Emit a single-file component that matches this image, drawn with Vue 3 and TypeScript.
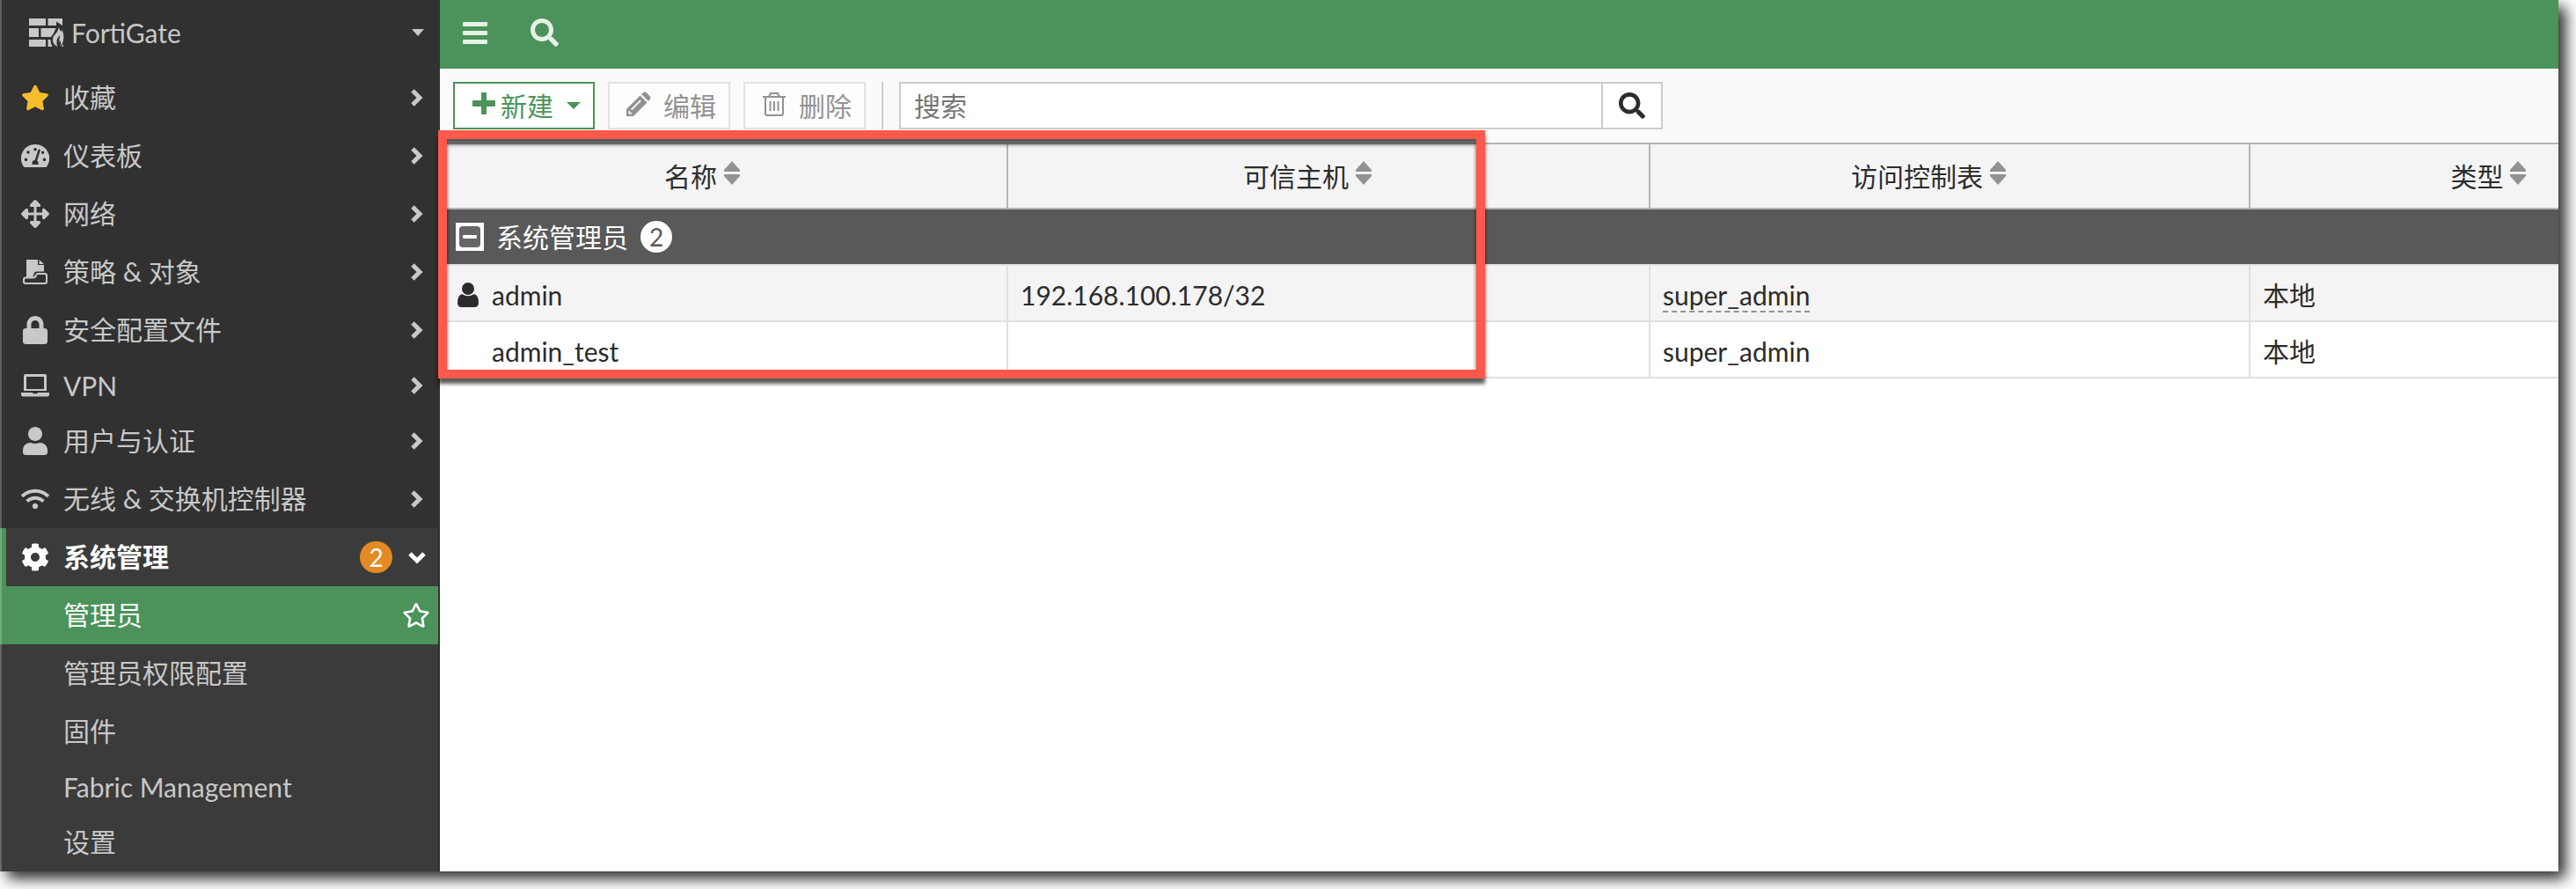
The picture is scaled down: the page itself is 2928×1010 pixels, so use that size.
<script setup lang="ts">
interface Shape { box: string; d: string }
interface NavItem { label: string; icon: string; latin?: boolean; gold?: boolean }
interface SubItem { label: string; latin?: boolean; active?: boolean }
interface Admin { name: string; host: string; profile: string; type: string; current: boolean }

const userPath = 'M224 256c70.7 0 128-57.3 128-128S294.7 0 224 0 96 57.3 96 128s57.3 128 128 128zm89.6 32h-16.7c-22.2 10.2-46.9 16-72.9 16s-50.6-5.8-72.9-16h-16.7C60.2 288 0 348.2 0 422.4V464c0 26.5 21.5 48 48 48h352c26.5 0 48-21.5 48-48v-41.6c0-74.2-60.2-134.4-134.4-134.4z'
const searchPath = 'M505 442.7L405.3 343c-4.5-4.5-10.6-7-17-7H372c27.6-35.3 44-79.7 44-128C416 93.1 322.9 0 208 0S0 93.1 0 208s93.1 208 208 208c48.3 0 92.7-16.4 128-44v16.3c0 6.4 2.5 12.5 7 17l99.7 99.7c9.4 9.4 24.6 9.4 33.9 0l28.3-28.3c9.4-9.4 9.4-24.6.1-34zM208 336c-70.7 0-128-57.2-128-128 0-70.7 57.2-128 128-128 70.7 0 128 57.2 128 128 0 70.7-57.2 128-128 128z'
const starOutline = 'M528.1 171.5L382 150.2 316.7 17.8c-11.7-23.6-45.6-23.9-57.4 0L194 150.2 47.9 171.5c-26.2 3.8-36.7 36.1-17.7 54.6l105.7 103-25 145.5c-4.5 26.3 23.2 46 46.4 33.7L288 439.6l130.7 68.7c23.2 12.2 50.9-7.4 46.4-33.7l-25-145.5 105.7-103c19-18.5 8.5-50.8-17.7-54.6zM388.6 312.3l23.7 138.4L288 385.4l-124.3 65.3 23.7-138.4-100.6-98 139-20.2 62.2-126 62.2 126 139 20.2-100.6 98z'

const icons: Record<string, Shape> = {
  star: { box: '0 0 576 512', d: 'M259.3 17.8L194 150.2 47.9 171.5c-26.2 3.8-36.7 36.1-17.7 54.6l105.7 103-25 145.5c-4.5 26.3 23.2 46 46.4 33.7L288 439.6l130.7 68.7c23.2 12.2 50.9-7.4 46.4-33.7l-25-145.5 105.7-103c19-18.5 8.5-50.8-17.7-54.6L382 150.2 316.7 17.8c-11.7-23.6-45.6-23.9-57.4 0z' },
  gauge: { box: '0 0 32 32', d: 'M16 3A16 16 0 0 0 2.200 27.200Q2.800 29 4.500 29H27.500Q29.200 29 29.800 27.200A16 16 0 0 0 16 3ZM16 7a1.800 1.800 0 1 1 0 3.600a1.800 1.800 0 1 1 0-3.600ZM8 10.200a1.800 1.800 0 1 1 0 3.600a1.800 1.800 0 1 1 0-3.600ZM24.600 10.600a1.700 1.700 0 1 1 0 3.400a1.700 1.700 0 1 1 0-3.400ZM5.500 18.600a1.800 1.800 0 1 1 0 3.600a1.800 1.800 0 1 1 0-3.600ZM26.500 18.600a1.800 1.800 0 1 1 0 3.600a1.800 1.800 0 1 1 0-3.600ZM20.200 8.600a1.200 1.200 0 0 1 1.600 1.300L18.200 21.500Q20.500 23.500 19.300 26H12.700Q11.500 21.700 15.700 20.700L19.400 9.200Z' },
  arrows: { box: '0 0 32 32', d: 'M14.800 0.600Q16-0.400 17.200 0.600L22 5.400Q22.600 8 20.500 8H17.500V14.500H24V11.500Q24 9.400 26.600 10L31.400 14.800Q32.400 16 31.400 17.200L26.600 22Q24 22.600 24 20.500V17.500H17.500V24H20.500Q22.600 24 22 26.600L17.200 31.400Q16 32.400 14.800 31.400L10 26.600Q9.400 24 11.500 24H14.500V17.500H8V20.500Q8 22.600 5.400 22L0.600 17.200Q-0.400 16 0.600 14.800L5.400 10Q8 9.400 8 11.500V14.500H14.500V8H11.500Q9.400 8 10 5.400Z' },
  policy: { box: '0 0 32 32', d: 'M6 2H19V8H26V15.500H18Q15 15.500 14.500 18Q14 21.500 12 21.500H6ZM20.500 2L26 7H20.500ZM5 21.500H12.500Q15.500 21.500 16 19.500Q16.500 17 19 17H27A3 3 0 0 1 30 20V27A3 3 0 0 1 27 30H5A3 3 0 0 1 2 27V24.500A3 3 0 0 1 5 21.500ZM5.500 23.500Q4 23.500 4 25V26.500Q4 28 5.500 28H26.500Q28 28 28 26.500V20.500Q28 19 26.500 19H19Q18 19 17.800 20.500Q17 23.500 13.500 23.500Z' },
  lock: { box: '0 0 448 512', d: 'M400 224h-24v-72C376 68.2 307.8 0 224 0S72 68.2 72 152v72H48c-26.500 0-48 21.500-48 48v192c0 26.500 21.500 48 48 48h352c26.500 0 48-21.500 48-48V272c0-26.500-21.500-48-48-48zm-104 0H152v-72c0-39.700 32.300-72 72-72s72 32.300 72 72v72z' },
  laptop: { box: '0 0 32 32', d: 'M5 3H27Q29 3 29 5V22H3V5Q3 3 5 3ZM6 6V20H26V6ZM0 24H13Q13 25.300 14.500 25.300H17.500Q19 25.300 19 24H32V26Q32 28.500 29.500 28.500H2.500Q0 28.500 0 26Z' },
  user: { box: '0 0 448 512', d: userPath },
  wifi: { box: '0 0 640 512', d: 'M634.910 154.880C457.740-8.990 182.190-8.930 5.090 154.880c-6.660 6.160-6.790 16.590-.35 22.980l34.240 33.970c6.140 6.100 16.020 6.230 22.400.38 145.920-133.680 371.300-133.710 517.250 0 6.380 5.850 16.260 5.710 22.400-.38l34.240-33.970c6.430-6.390 6.300-16.820-.36-22.980zM320 352c-35.350 0-64 28.650-64 64s28.650 64 64 64 64-28.650 64-64-28.650-64-64-64zm202.670-83.590c-115.260-101.930-290.210-101.820-405.340 0-6.900 6.100-7.120 16.690-.57 23.150l34.440 33.990c6 5.920 15.660 6.320 22.050.8 83.950-72.570 209.740-72.410 293.490 0 6.390 5.520 16.050 5.130 22.050-.8l34.440-33.990c6.560-6.460 6.330-17.060-.56-23.150z' },
  cog: { box: '0 0 512 512', d: 'M487.4 315.7l-42.6-24.6c4.3-23.2 4.3-47 0-70.2l42.6-24.6c4.9-2.8 7.1-8.6 5.5-14-11.1-35.6-30-67.8-54.7-94.6-3.8-4.1-10-5.1-14.8-2.3L380.8 110c-17.9-15.4-38.5-27.3-60.8-35.1V25.8c0-5.600-3.900-10.500-9.400-11.700-36.700-8.200-74.300-7.800-109.200 0-5.500 1.200-9.400 6.100-9.400 11.700V75c-22.200 7.900-42.800 19.800-60.800 35.100L88.700 85.500c-4.900-2.800-11-1.900-14.800 2.300-24.700 26.700-43.600 58.900-54.700 94.600-1.700 5.400.6 11.200 5.500 14L67.300 221c-4.300 23.200-4.300 47 0 70.200l-42.600 24.600c-4.900 2.800-7.100 8.600-5.500 14 11.100 35.600 30 67.800 54.700 94.600 3.800 4.100 10 5.100 14.800 2.300l42.600-24.600c17.900 15.400 38.500 27.300 60.800 35.100v49.200c0 5.600 3.900 10.500 9.400 11.700 36.700 8.200 74.300 7.800 109.200 0 5.500-1.200 9.400-6.100 9.400-11.700v-49.200c22.200-7.900 42.800-19.800 60.800-35.100l42.600 24.600c4.900 2.800 11 1.900 14.800-2.300 24.700-26.700 43.600-58.900 54.700-94.600 1.500-5.500-.7-11.300-5.600-14.100zM256 336c-44.100 0-80-35.900-80-80s35.900-80 80-80 80 35.900 80 80-35.900 80-80 80z' },
}

const nav: NavItem[] = [
  { label: '收藏', icon: 'star', gold: true },
  { label: '仪表板', icon: 'gauge' },
  { label: '网络', icon: 'arrows' },
  { label: '策略 & 对象', icon: 'policy' },
  { label: '安全配置文件', icon: 'lock' },
  { label: 'VPN', icon: 'laptop', latin: true },
  { label: '用户与认证', icon: 'user' },
  { label: '无线 & 交换机控制器', icon: 'wifi' },
]

const sub: SubItem[] = [
  { label: '管理员', active: true },
  { label: '管理员权限配置' },
  { label: '固件' },
  { label: 'Fabric Management', latin: true },
  { label: '设置' },
]

const columns: string[] = ['名称', '可信主机', '访问控制表', '类型']
const admins: Admin[] = [
  { name: 'admin', host: '192.168.100.178/32', profile: 'super_admin', type: '本地', current: true },
  { name: 'admin_test', host: '', profile: 'super_admin', type: '本地', current: false },
]
</script>

<template>
  <div class="page">
    <div class="frame">
      <aside class="sidebar">
        <button class="brand" type="button">
          <svg class="brand-icon" viewBox="0 0 40 32" aria-hidden="true">
            <path d="M0 0H19V8H0ZM21.500 0H38V8L31 3.500V8H21.500ZM0 11H11V21H0ZM13.500 11H30.500Q29 16 25 21H13.500ZM0 24H19V32H0ZM21.500 24H24.500Q24 28 26.500 32H21.500ZM39 29V32H37Z" />
            <path d="M33.500 10Q35 13 36.500 15Q38 13.500 37.500 12.500Q40 19 39.200 23Q38.500 29 35.500 31.500Q37 28 35.500 25Q35 26.500 34.500 27Q34 22 35.500 19Q31.500 22 31.500 26Q31 29 32.500 32Q27 29.500 27 24.500Q27 20 30 17.500Q33.500 14 33.500 10Z" />
          </svg>
          <span>FortiGate</span>
          <svg class="caret" viewBox="0 0 14 8" aria-hidden="true"><path d="M0 0H14L7 8Z" /></svg>
        </button>
        <nav>
          <a v-for="item in nav" :key="item.label" href="#" class="item" :class="{ latin: item.latin }">
            <svg class="icon" :class="{ gold: item.gold }" :viewBox="icons[item.icon].box" aria-hidden="true"><path fill-rule="evenodd" :d="icons[item.icon].d" /></svg>
            <span class="label">{{ item.label }}</span>
            <svg class="chev" viewBox="0 0 20 20" aria-hidden="true"><path d="M5 2L13 10L5 18" /></svg>
          </a>
          <a href="#" class="item open">
            <svg class="icon" :viewBox="icons.cog.box" aria-hidden="true"><path :d="icons.cog.d" /></svg>
            <span class="label">系统管理</span>
            <span class="badge">2</span>
            <svg class="chev" viewBox="0 0 20 20" aria-hidden="true"><path d="M2 6L10 14L18 6" /></svg>
          </a>
          <div class="sub">
            <a v-for="item in sub" :key="item.label" href="#" class="item" :class="{ latin: item.latin, active: item.active }">
              <span class="label">{{ item.label }}</span>
              <svg v-if="item.active" class="fav" viewBox="0 0 576 512" aria-hidden="true"><path :d="starOutline" /></svg>
            </a>
          </div>
        </nav>
      </aside>

      <main class="main">
        <header class="topbar">
          <button type="button" aria-label="菜单">
            <svg viewBox="0 0 32 32" aria-hidden="true"><path d="M2 5Q2 4 3 4H29Q30 4 30 5V8Q30 9 29 9H3Q2 9 2 8ZM2 15Q2 14 3 14H29Q30 14 30 15V18Q30 19 29 19H3Q2 19 2 18ZM2 25Q2 24 3 24H29Q30 24 30 25V28Q30 29 29 29H3Q2 29 2 28Z" /></svg>
          </button>
          <button type="button" aria-label="搜索菜单">
            <svg viewBox="0 0 512 512" aria-hidden="true"><path :d="searchPath" /></svg>
          </button>
        </header>

        <div class="toolbar">
          <button type="button" class="btn create">
            <svg class="glyph" viewBox="0 0 38 32" aria-hidden="true"><path d="M16 1H21Q22 1 22 2V10H31Q32 10 32 11V16Q32 17 31 17H22V25Q22 26 21 26H17Q16 26 16 25V17H7Q6 17 6 16V11Q6 10 7 10H16Z" /></svg>
            <span>新建</span>
            <svg class="drop" viewBox="0 0 16 8" aria-hidden="true"><path d="M0 0H16L8 8Z" /></svg>
          </button>
          <button type="button" class="btn" disabled>
            <svg class="glyph" viewBox="0 0 38 32" aria-hidden="true"><path fill-rule="evenodd" d="M5 28V20L20.500 4.500L28.500 12.500L13 28ZM22 3L24.500 0.800Q26 0 27.500 1L32 5.500Q33 7 32 8.500L30 11ZM10 20L20.500 9.500L21.800 10.800L11.300 21.300ZM7.500 22V25.500H11V24H9V22Z" /></svg>
            <span>编辑</span>
          </button>
          <button type="button" class="btn" disabled>
            <svg class="glyph line" viewBox="0 0 38 32" aria-hidden="true"><path d="M6 6H32M13 6L15 2H23L25 6M9 6V25Q9 27 11 27H27Q29 27 29 25V6M14.500 11V22M19 11V22M23.500 11V22" /></svg>
            <span>删除</span>
          </button>
          <span class="divider"></span>
          <div class="search">
            <input type="text" placeholder="搜索" aria-label="搜索" />
            <button type="button" aria-label="执行搜索">
              <svg viewBox="0 0 512 512" aria-hidden="true"><path :d="searchPath" /></svg>
            </button>
          </div>
        </div>

        <section class="grid">
          <div class="clip">
            <table>
              <colgroup><col class="c-name" /><col class="c-host" /><col class="c-profile" /><col /></colgroup>
              <thead>
                <tr>
                  <th v-for="c in columns" :key="c" scope="col">
                    <span class="head">{{ c }}<svg viewBox="0 0 18 28" aria-hidden="true"><path d="M0 12V10L9 0L18 10V12ZM0 15H18V17L9 27L0 17Z" /></svg></span>
                  </th>
                </tr>
              </thead>
              <tbody>
                <tr class="group">
                  <td colspan="4">
                    <div class="group-cell">
                      <button type="button" aria-label="折叠"><svg viewBox="0 0 32 32" aria-hidden="true"><path fill="#fff" d="M0 0H32V32H0Z" /><rect x="4" y="4" width="24" height="24" rx="4" fill="#666" /><rect x="8" y="14" width="16" height="4" rx="1" fill="#fff" /></svg></button>
                      <span>系统管理员</span>
                      <span class="count">2</span>
                    </div>
                  </td>
                </tr>
                <tr v-for="a in admins" :key="a.name" class="row">
                  <td class="name"><div class="name-cell"><span class="who"><svg v-if="a.current" viewBox="0 0 24 28" aria-hidden="true"><circle cx="12" cy="7" r="7" /><path d="M5 13Q12 17.500 19 13Q24 14.500 24 23Q24 28 19 28H5Q0 28 0 23Q0 14.500 5 13Z" /></svg></span>{{ a.name }}</div></td>
                  <td>{{ a.host }}</td>
                  <td><a v-if="a.current" href="#" class="ref">{{ a.profile }}</a><template v-else>{{ a.profile }}</template></td>
                  <td>{{ a.type }}</td>
                </tr>
              </tbody>
            </table>
          </div>
          <div class="marker"></div>
        </section>
      </main>
    </div>
  </div>
</template>

<style>
body { margin: 0; background: #fff; }
</style>

<style scoped>
* { box-sizing: border-box; }
.page {
  padding: 0 20px 20px 0;
  overflow: hidden;
  font-family: Lato, "Noto Sans CJK SC", sans-serif;
  font-size: 30px;
  line-height: 36px;
  color: #2c2c2c;
}
.frame {
  display: flex;
  min-height: calc(100vh - 20px);
  background: #fff;
  box-shadow: 8px 8px 16px rgba(0, 0, 0, 0.85);
}
button, input { font: inherit; color: inherit; margin: 0; padding: 0; border: 0; background: none; border-radius: 0; }
a { color: inherit; text-decoration: none; }
svg { display: block; flex: none; fill: currentColor; }

.sidebar {
  position: relative;
  flex: none;
  display: flex;
  flex-direction: column;
  width: 500px;
  background: #313131;
  color: #c8c8c8;
  border-right: 2px solid #313131;
}
.sidebar::after {
  content: "";
  position: absolute;
  inset: 0 auto 0 0;
  width: 2px;
  background: rgba(255, 255, 255, 0.22);
}
.brand { display: flex; align-items: center; width: 100%; height: 78px; padding: 0 16px 4px 33px; text-align: left; }
.brand span { flex: 1; margin-left: 8px; }
.brand-icon { width: 40px; height: 32px; }
.caret { width: 14px; height: 8px; }
nav { display: flex; flex-direction: column; flex: 1; }
.item { display: flex; align-items: center; height: 66px; padding: 0 14px 0 24px; }
.item.latin { height: 60px; }
.label { padding-bottom: 2px; }
.latin .label { padding-bottom: 0; }
.icon { width: 32px; height: 32px; margin-right: 16px; }
.icon.gold { color: #f7bd2c; }
.chev { width: 20px; height: 20px; margin-left: auto; fill: none; stroke: currentColor; stroke-width: 5; }
.open { padding-left: 17px; border-left: 7px solid #4b935a; background: #3b3b3b; color: #fff; font-weight: 700; }
.open .chev { margin-left: 18px; }
.badge {
  width: 37px;
  margin-left: auto;
  border-radius: 18px;
  background: #e48a24;
  font-size: 28px;
  font-weight: 400;
  text-align: center;
}
.sub { flex: 1; background: #3b3b3b; }
.sub .item { padding-left: 72px; padding-right: 9px; }
.sub .active { background: #4b935a; color: #fff; }
.fav { width: 32px; height: 28px; margin-left: auto; }

.main { flex: 1; min-width: 0; }
.topbar { display: flex; align-items: center; gap: 47px; height: 78px; padding: 0 24px 4px; background: #4b935a; color: #e7f1e8; }
.topbar svg { width: 32px; height: 32px; }

.toolbar { display: flex; align-items: center; gap: 15px; padding: 15px; background: #fafafa; }
.btn { display: flex; align-items: center; height: 54px; padding: 0 14px; border: 2px solid #e2e2e2; background: #fdfdfd; color: #929292; }
.btn .glyph { width: 38px; height: 32px; margin-right: 9px; }
.btn .line { fill: none; stroke: currentColor; stroke-width: 2; }
.create { border-color: #4b935a; background: #fff; color: #4b935a; }
.create .glyph { margin-right: 0; }
.create .drop { width: 16px; height: 8px; margin-left: 15px; }
.divider { width: 2px; height: 54px; margin: 0 3px; background: #ccc; }
.search { display: flex; width: 868px; height: 54px; border: 2px solid #ccc; background: #fff; }
.search input { flex: 1; min-width: 0; padding: 0 15px; outline: 0; }
.search input::placeholder { color: #757575; opacity: 1; }
.search button { display: flex; align-items: center; justify-content: center; width: 68px; border-left: 2px solid #ccc; }
.search svg { width: 30px; height: 30px; }

.grid { position: relative; }
.clip { overflow: hidden; }
table { width: 110%; table-layout: fixed; border-collapse: separate; border-spacing: 0; }
.c-name { width: 646px; }
.c-host { width: 730px; }
.c-profile { width: 682px; }
th { height: 76px; padding: 0 48px 0 0; border: solid #b5b5b5; border-width: 2px 2px 2px 0; background: #f4f4f4; font-weight: 400; }
.head { display: flex; align-items: center; justify-content: center; gap: 8px; }
.head svg { width: 18px; height: 28px; margin-bottom: 6px; color: #929292; }
td { height: 64px; padding: 0 14px; border: solid #e0e0e0; border-width: 0 2px 2px 0; }
.row td { padding-top: 3px; }
.row:nth-child(even) td { background: #f4f4f4; }
.group td { padding: 0 18px; background: #595959; color: #fff; }
.group-cell { display: flex; align-items: center; }
.group-cell svg { width: 32px; height: 32px; }
.group-cell button { margin-right: 14px; }
.count { width: 36px; margin-left: 14px; border-radius: 18px; background: #fff; color: #595959; font-size: 28px; text-align: center; }
td.name { padding-left: 20px; }
.name-cell { display: flex; align-items: center; }
.who { width: 39px; }
.who svg { width: 24px; height: 28px; }
.ref { border-bottom: 2px dashed #929292; }
.marker {
  position: absolute;
  top: -14px;
  bottom: 0;
  left: -2px;
  width: 1190px;
  border: 10px solid #ff594b;
  filter: drop-shadow(0 6px 2px rgba(0, 0, 0, 0.65));
  pointer-events: none;
}
</style>
